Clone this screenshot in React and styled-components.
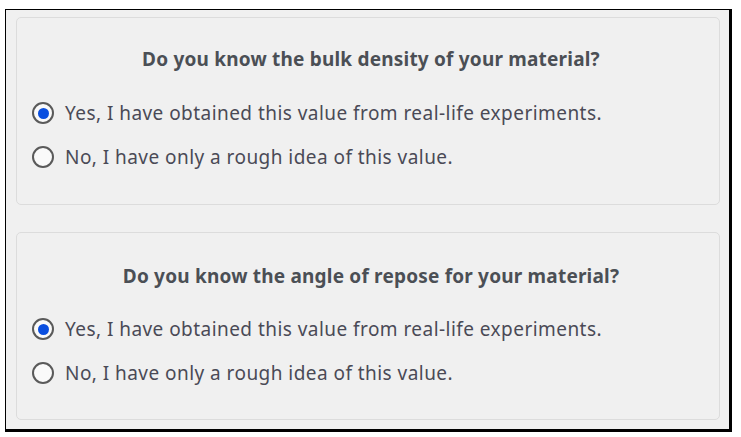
import React, { useState } from 'react';
import styled, { createGlobalStyle } from 'styled-components';

const GlobalStyle = createGlobalStyle`
  body {
    margin: 0;
    background: #ffffff;
    font-family: 'Noto Sans', 'Open Sans', sans-serif;
  }
`;

const Frame = styled.div`
  margin: 9px 0 0 5px;
  width: 727px;
  height: 423px;
  box-sizing: border-box;
  background: #f0f0f0;
  border-style: solid;
  border-color: #000;
  border-width: 1px 3px 3px 1px;
  padding: 7px 9px 9px 10px;
  display: flex;
  flex-direction: column;
  gap: 27px;
`;

const Panel = styled.fieldset`
  margin: 0;
  min-width: 0;
  height: 189px;
  box-sizing: border-box;
  border: 1px solid #dcdcdc;
  border-radius: 5px;
  padding: ${(p) => p.$top}px 16px 0 15px;
  display: flex;
  flex-direction: column;
`;

const Title = styled.div`
  padding-left: 7px;
  font-size: 19px;
  line-height: 26px;
  font-weight: 700;
  letter-spacing: 0.2px;
  color: #4b4f55;
  text-align: center;
`;

const Options = styled.div`
  margin-top: ${(p) => p.$top}px;
  display: flex;
  flex-direction: column;
  gap: 22px;
`;

const Option = styled.label`
  display: flex;
  align-items: center;
  gap: 11px;
  height: 22px;
  font-size: 19px;
  letter-spacing: 0.45px;
  color: #4a4a56;
  cursor: pointer;
`;

const Radio = styled.input.attrs({ type: 'radio' })`
  appearance: none;
  margin: 0;
  width: 22px;
  height: 22px;
  flex: none;
  border-radius: 50%;
  border: 2px solid #5a5a5a;
  background: #fafafa;
  display: grid;
  place-items: center;
  box-sizing: border-box;

  &::after {
    content: '';
    width: 11px;
    height: 11px;
    border-radius: 50%;
    background: ${(p) => (p.checked ? '#0a4fe0' : 'transparent')};
  }
`;

const questions = [
  { id: 'density', title: 'Do you know the bulk density of your material?', top: 28, gap: 30 },
  { id: 'repose', title: 'Do you know the angle of repose for your material?', top: 30, gap: 29 },
];

const answers = [
  { value: 'yes', label: 'Yes, I have obtained this value from real-life experiments.' },
  { value: 'no', label: 'No, I have only a rough idea of this value.' },
];

const Question = ({ q }) => {
  const [value, setValue] = useState('yes');
  return (
    <Panel $top={q.top}>
      <Title>{q.title}</Title>
      <Options $top={q.gap}>
        {answers.map((a) => (
          <Option key={a.value}>
            <Radio
              name={q.id}
              checked={value === a.value}
              onChange={() => setValue(a.value)}
            />
            {a.label}
          </Option>
        ))}
      </Options>
    </Panel>
  );
};

export default function App() {
  return (
    <>
      <GlobalStyle />
      <Frame>
        {questions.map((q) => (
          <Question key={q.id} q={q} />
        ))}
      </Frame>
    </>
  );
}
